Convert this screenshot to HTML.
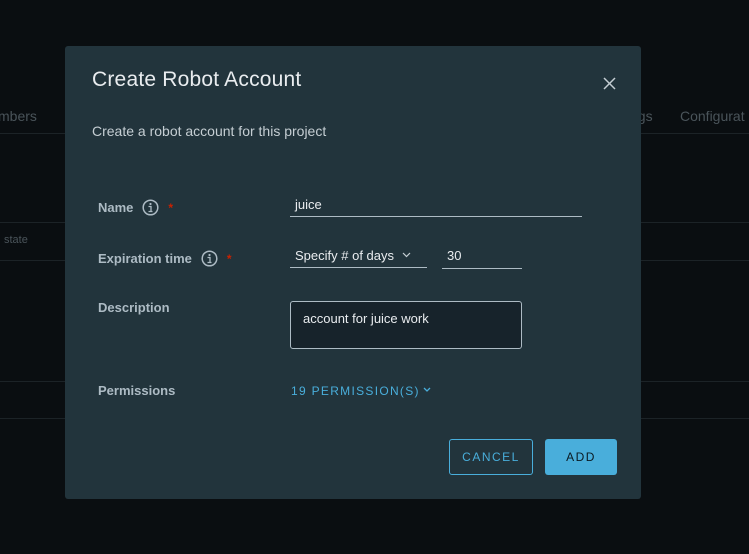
<!DOCTYPE html>
<html><head><style>
body{margin:0;width:749px;height:554px;background:#0a0e11;font-family:"Liberation Sans",sans-serif;position:relative;overflow:hidden}
.a{position:absolute}
.hl{position:absolute;height:1px;background:#1c2327}
.bg{color:#4a545a;font-size:14px}
.m{position:absolute;left:65px;top:46px;width:576px;height:453px;background:#22343c;border-radius:3px}
.lbl{position:absolute;left:33px;color:#adbbc4;font-size:13px;font-weight:bold;line-height:16px}
.info{display:inline-block;vertical-align:middle;margin-left:9px;margin-top:-3px}
.req{color:#c92100;margin-left:9px;font-size:12px;vertical-align:top}
.in{position:absolute;border-bottom:1px solid #adbbc4;color:#e9ecef;font-size:13px;padding-left:5px;box-sizing:border-box;line-height:18px}
</style></head><body>
<div class="hl" style="left:0;top:133px;width:749px"></div>
<div class="hl" style="left:0;top:222px;width:749px"></div>
<div class="hl" style="left:0;top:260px;width:749px"></div>
<div class="hl" style="left:0;top:381px;width:749px"></div>
<div class="hl" style="left:0;top:418px;width:749px"></div>
<div class="a bg" style="left:-2px;top:108px">mbers</div>
<div class="a bg" style="left:630px;top:108px">ngs</div>
<div class="a bg" style="left:680px;top:108px">Configurat</div>
<div class="a bg" style="left:4px;top:234px;font-size:11px">state</div>
<div class="m">
 <div class="a" style="left:27px;top:22px;color:#e9ecef;font-size:21px;letter-spacing:0.2px">Create Robot Account</div>
 <svg class="a" style="left:538px;top:31px" width="13" height="13"><path d="M1 1L12 12M12 1L1 12" stroke="#c5ced3" stroke-width="1.5"/></svg>
 <div class="a" style="left:27px;top:77px;color:#c5ced3;font-size:14px">Create a robot account for this project</div>
 <div class="lbl" style="top:154px">Name<svg class="info" width="17" height="17"><circle cx="8.5" cy="8.5" r="7.3" fill="none" stroke="#adbbc4" stroke-width="1.5"/><circle cx="8.5" cy="5" r="1.1" fill="#adbbc4"/><path d="M6.5 7.5H9V12.5M6.5 12.5H10.5" stroke="#adbbc4" stroke-width="1.3" fill="none"/></svg><span class="req">*</span></div>
 <div class="in" style="left:225px;top:150px;width:292px;height:21px">juice</div>
 <div class="lbl" style="top:205px">Expiration time<svg class="info" width="17" height="17"><circle cx="8.5" cy="8.5" r="7.3" fill="none" stroke="#adbbc4" stroke-width="1.5"/><circle cx="8.5" cy="5" r="1.1" fill="#adbbc4"/><path d="M6.5 7.5H9V12.5M6.5 12.5H10.5" stroke="#adbbc4" stroke-width="1.3" fill="none"/></svg><span class="req">*</span></div>
 <div class="in" style="left:225px;top:201px;width:137px;height:21px">Specify # of days <svg width="9" height="6" style="margin-left:4px;vertical-align:2px"><path d="M1 1L4.5 4.5L8 1" stroke="#c5ced3" stroke-width="1.2" fill="none"/></svg></div>
 <div class="in" style="left:377px;top:201px;width:80px;height:22px">30</div>
 <div class="lbl" style="top:254px">Description</div>
 <div class="a" style="left:225px;top:255px;border:1px solid #adbbc4;border-radius:3px;background:#17232b;color:#e9ecef;font-size:13px;padding:9px 12px;box-sizing:border-box;width:232px;height:48px">account for juice work</div>
 <div class="lbl" style="top:337px">Permissions</div>
 <div class="a" style="left:226px;top:338px;color:#49aedb;font-size:12px;letter-spacing:1.3px">19 PERMISSION(S)<svg width="8" height="6" style="margin-left:3px;vertical-align:2px"><path d="M1 1L4 4L7 1" stroke="#49aedb" stroke-width="1.3" fill="none"/></svg></div>
 <div class="a" style="left:384px;top:393px;width:82px;height:34px;border:1px solid #49aedb;border-radius:3px;color:#49aedb;font-size:12px;letter-spacing:1.5px;text-align:center;line-height:34px">CANCEL</div>
 <div class="a" style="left:480px;top:393px;width:72px;height:36px;background:#49aedb;border-radius:3px;color:#0a1a22;font-size:12px;letter-spacing:1.5px;text-align:center;line-height:36px">ADD</div>
</div>
</body></html>
